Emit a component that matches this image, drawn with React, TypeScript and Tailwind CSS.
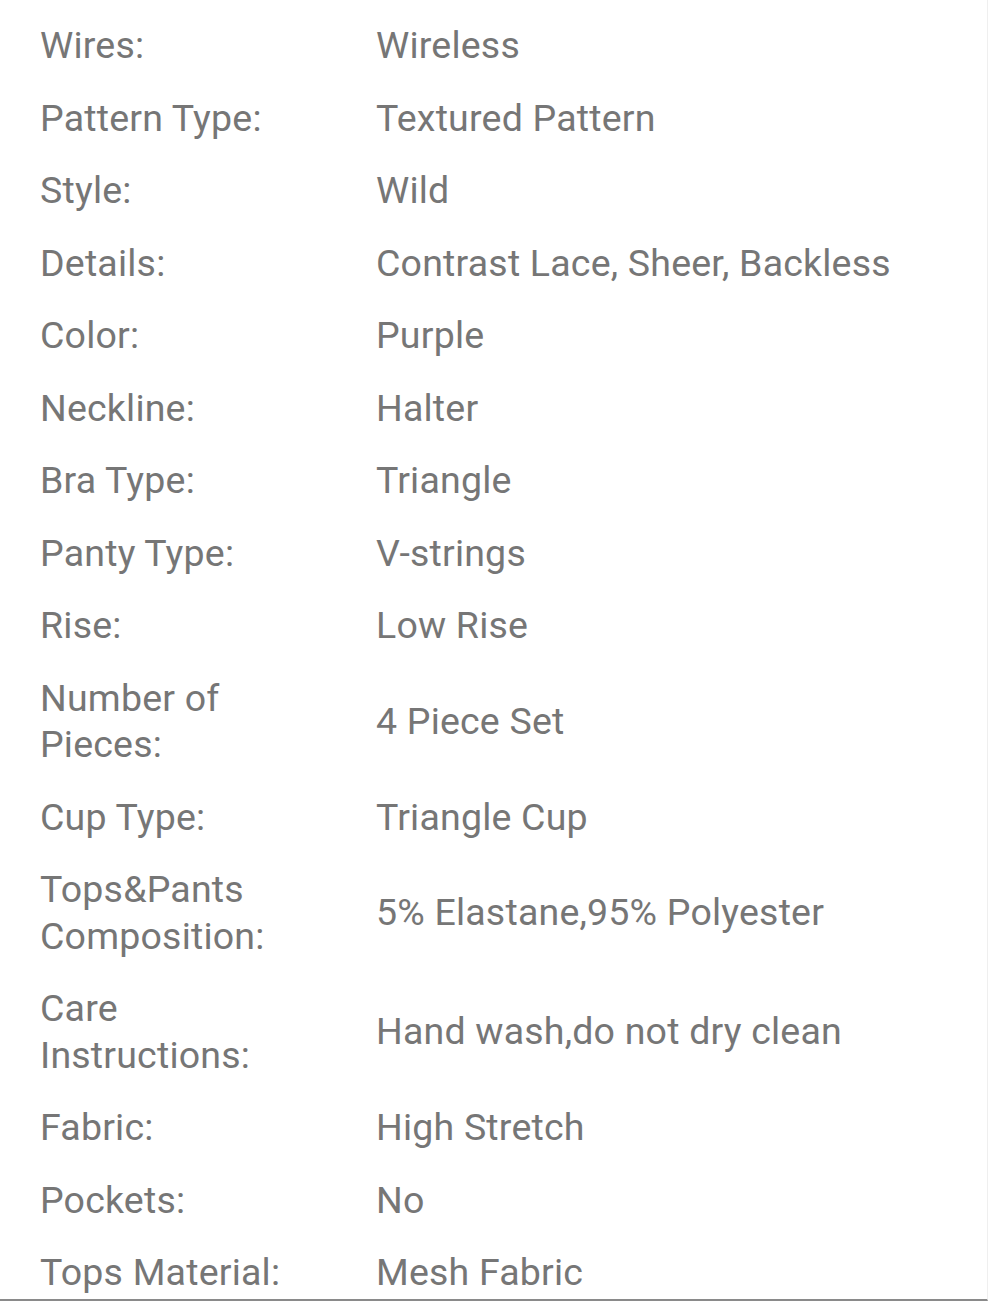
const specs = [
  { label: 'Wires:', value: 'Wireless' },
  { label: 'Pattern Type:', value: 'Textured Pattern' },
  { label: 'Style:', value: 'Wild' },
  { label: 'Details:', value: 'Contrast Lace, Sheer, Backless' },
  { label: 'Color:', value: 'Purple' },
  { label: 'Neckline:', value: 'Halter' },
  { label: 'Bra Type:', value: 'Triangle' },
  { label: 'Panty Type:', value: 'V-strings' },
  { label: 'Rise:', value: 'Low Rise' },
  { label: 'Number of Pieces:', value: '4 Piece Set' },
  { label: 'Cup Type:', value: 'Triangle Cup' },
  { label: 'Tops&Pants Composition:', value: '5% Elastane,95% Polyester' },
  { label: 'Care Instructions:', value: 'Hand wash,do not dry clean' },
  { label: 'Fabric:', value: 'High Stretch' },
  { label: 'Pockets:', value: 'No' },
  { label: 'Tops Material:', value: 'Mesh Fabric' },
];

export default function App() {
  return (
    <div className="w-[988px] h-[1301px] bg-white overflow-hidden font-['Roboto',sans-serif]">
      <div className="h-full flex flex-col border-r border-[#efefef] border-b-2 border-b-[#8a8a8a]">
        {/* spec rows */}
        <div className="pt-[9px] pl-10">
          {specs.map((row) => (
            <div
              key={row.label}
              className="flex items-center py-[13px] text-[37.5px] leading-[46.5px] tracking-[0.2px] text-[#767676]"
            >
              <div className="w-[336px] shrink-0 pr-[50px]">{row.label}</div>
              <div className="flex-1">{row.value}</div>
            </div>
          ))}
        </div>
      </div>
    </div>
  );
}
